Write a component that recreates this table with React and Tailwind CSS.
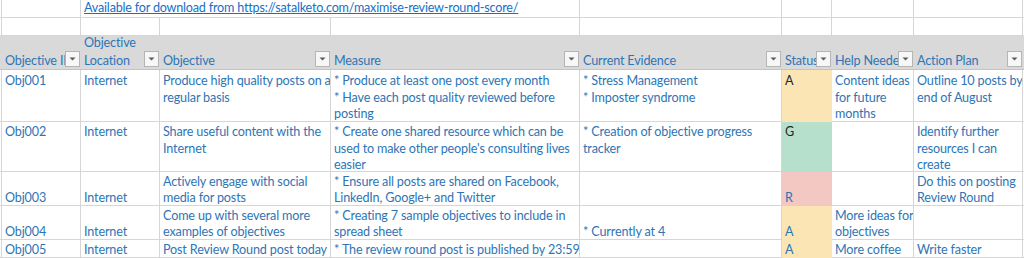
const cols = "grid grid-cols-[2px_79px_79px_171px_249px_202px_50px_82px_109px_1px]";

const fills = {
  A: "bg-[#fbe5b4] border-r-[#fbe5b4] border-b-[#fbe5b4]",
  G: "bg-[#b6e0cb] border-r-[#b6e0cb] border-b-[#b6e0cb]",
  R: "bg-[#f3c7c2] border-r-[#f3c7c2] border-b-[#f3c7c2]",
};

const rows = [
  {
    h: "h-[52px]",
    align: "justify-start pt-px",
    cells: [
      ["Obj001"],
      ["Internet"],
      ["Produce high quality posts on a", "regular basis"],
      ["* Produce at least one post every month", "* Have each post quality reviewed before", "posting"],
      ["* Stress Management", "* Imposter syndrome"],
      ["A"],
      ["Content ideas", "for future", "months"],
      ["Outline 10 posts by", "end of August"],
    ],
    status: "A",
    dark: true,
  },
  {
    h: "h-[50px]",
    align: "justify-start",
    cells: [
      ["Obj002"],
      ["Internet"],
      ["Share useful content with the", "Internet"],
      ["* Create one shared resource which can be", "used to make other people's consulting lives", "easier"],
      ["* Creation of objective progress", "tracker"],
      ["G"],
      [],
      ["Identify further", "resources I can", "create"],
    ],
    status: "G",
    dark: true,
  },
  {
    h: "h-[34px]",
    align: "justify-end",
    cells: [
      ["Obj003"],
      ["Internet"],
      ["Actively engage with social", "media for posts"],
      ["* Ensure all posts are shared on Facebook,", "LinkedIn, Google+ and Twitter"],
      [],
      ["R"],
      [],
      ["Do this on posting", "Review Round"],
    ],
    status: "R",
  },
  {
    h: "h-[34px]",
    align: "justify-end",
    cells: [
      ["Obj004"],
      ["Internet"],
      ["Come up with several more", "examples of objectives"],
      ["* Creating 7 sample objectives to include in", "spread sheet"],
      ["* Currently at 4"],
      ["A"],
      ["More ideas for", "objectives"],
      [],
    ],
    status: "A",
  },
  {
    h: "h-[18px]",
    align: "justify-end",
    cells: [
      ["Obj005"],
      ["Internet"],
      ["Post Review Round post today"],
      ["* The review round post is published by 23:59"],
      [],
      ["A"],
      ["More coffee"],
      ["Write faster"],
    ],
    status: "A",
  },
];

const headers = [
  ["Objective ID"],
  ["Objective", "Location"],
  ["Objective"],
  ["Measure"],
  ["Current Evidence"],
  ["Status"],
  ["Help Needed"],
  ["Action Plan"],
];

function FilterButton() {
  return (
    <div className="absolute right-px bottom-[2px] w-[15px] h-[16px] border border-[#b5b5b5] bg-[#f7f7f7] flex items-center justify-center">
      <svg width="7" height="4" viewBox="0 0 7 4">
        <path d="M0.5 0.5 L6.5 0.5 L3.5 3.5 Z" fill="#5a5a5a" />
      </svg>
    </div>
  );
}

function Cell({ lines, className = "" }) {
  return (
    <div className={`flex flex-col pl-[3px] border-r border-b border-[#d6d6d6] overflow-hidden ${className}`}>
      {lines.map((l, i) => (
        <div key={i} className="whitespace-nowrap translate-y-[1.5px]">{l}</div>
      ))}
    </div>
  );
}

export default function App() {
  return (
    <div className="w-[1024px] h-[258px] overflow-hidden bg-white font-['Lato',sans-serif] text-[12.6px] tracking-[-0.15px] leading-[16.7px] text-[#2e75b6]">
      {/* top rows */}
      <div className={`${cols} h-[18px]`}>
        <div className="border-r border-b border-[#d6d6d6]" />
        <div className="border-r border-b border-[#d6d6d6]" />
        <div className="col-span-3 border-r border-b border-[#d6d6d6] pl-[3px] whitespace-nowrap">
          <span className="text-[#1570c8] underline tracking-[-0.2px]">Available for download from https://satalketo.com/maximise-review-round-score/</span>
        </div>
        <div className="border-r border-b border-[#d6d6d6]" />
        <div className="border-r border-b border-[#d6d6d6]" />
        <div className="border-r border-b border-[#d6d6d6]" />
        <div className="border-r border-b border-[#d6d6d6]" />
        <div className="border-b border-[#d6d6d6]" />
      </div>
      <div className={`${cols} h-[18px]`}>
        <div className="border-r border-b border-[#d6d6d6]" />
        {headers.map((_, i) => (
          <div key={i} className="border-r border-b border-[#d6d6d6]" />
        ))}
        <div className="border-b border-[#d6d6d6]" />
      </div>

      {/* header */}
      <div className={`${cols} h-[34px] bg-[#d9d9d9] border-b border-[#c4c4c4]`}>
        <div />
        {headers.map((h, i) => (
          <div key={i} className="relative flex flex-col justify-end pl-[3px] overflow-hidden leading-[18px]">
            {h.map((l, j) => (
              <div key={j} className="whitespace-nowrap translate-y-[1px]">{l}</div>
            ))}
            <FilterButton />
          </div>
        ))}
        <div />
      </div>

      {/* data */}
      {rows.map((r, ri) => (
        <div key={ri} className={`${cols} ${r.h}`}>
          <div className="border-r border-b border-[#d6d6d6]" />
          {r.cells.map((c, ci) => (
            <Cell
              key={ci}
              lines={c}
              className={`${r.align} ${ci === 5 ? fills[r.status] : ""} ${ci === 5 && r.dark ? "text-[#262626]" : ""}`}
            />
          ))}
          <div className="border-b border-[#d6d6d6]" />
        </div>
      ))}
    </div>
  );
}
